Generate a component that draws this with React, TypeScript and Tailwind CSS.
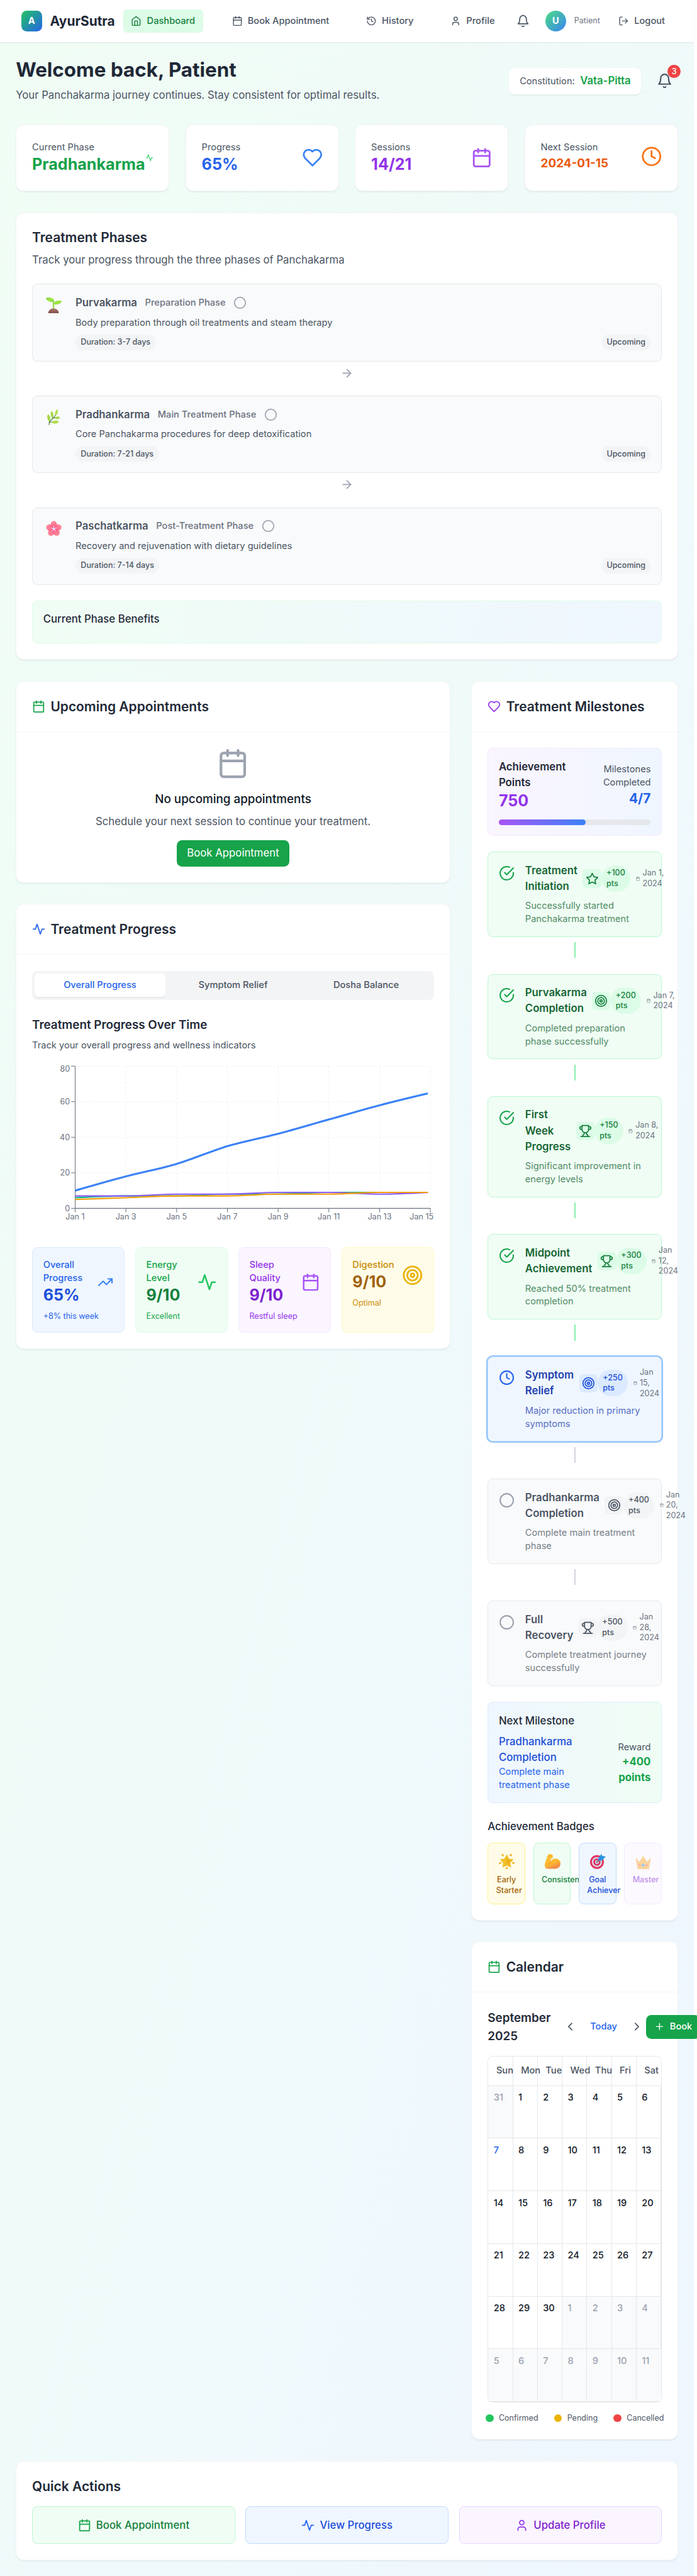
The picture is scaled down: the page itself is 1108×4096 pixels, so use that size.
import React from "react";

/* ---------- palette ---------- */

const PALETTE = [
  "[--color-gray-50:#f9fafb] [--color-gray-100:#f3f4f6] [--color-gray-200:#e5e7eb] [--color-gray-300:#d1d5db] [--color-gray-400:#9ca3af]",
  "[--color-gray-500:#6b7280] [--color-gray-600:#4b5563] [--color-gray-700:#374151] [--color-gray-800:#1f2937] [--color-gray-900:#111827]",
  "[--color-green-50:#f0fdf4] [--color-green-100:#dcfce7] [--color-green-200:#bbf7d0] [--color-green-300:#86efac] [--color-green-400:#4ade80]",
  "[--color-green-500:#22c55e] [--color-green-600:#16a34a] [--color-green-700:#15803d] [--color-green-800:#166534]",
  "[--color-blue-50:#eff6ff] [--color-blue-100:#dbeafe] [--color-blue-200:#bfdbfe] [--color-blue-300:#93c5fd] [--color-blue-500:#3b82f6]",
  "[--color-blue-600:#2563eb] [--color-blue-700:#1d4ed8] [--color-blue-800:#1e40af]",
  "[--color-purple-50:#faf5ff] [--color-purple-100:#f3e8ff] [--color-purple-200:#e9d5ff] [--color-purple-500:#a855f7] [--color-purple-600:#9333ea] [--color-purple-700:#7e22ce]",
  "[--color-yellow-50:#fefce8] [--color-yellow-100:#fef9c3] [--color-yellow-200:#fef08a] [--color-yellow-500:#eab308] [--color-yellow-600:#ca8a04] [--color-yellow-700:#a16207]",
  "[--color-orange-500:#f97316] [--color-orange-600:#ea580c] [--color-red-500:#ef4444]",
].join(" ");

/* ---------- icons ---------- */

const ICONS: Record<string, React.ReactNode> = {
  home: (
    <>
      <path d="m3 9 9-7 9 7v11a2 2 0 0 1-2 2H5a2 2 0 0 1-2-2z" />
      <polyline points="9 22 9 12 15 12 15 22" />
    </>
  ),
  calendar: (
    <>
      <rect width="18" height="18" x="3" y="4" rx="2" ry="2" />
      <line x1="16" x2="16" y1="2" y2="6" />
      <line x1="8" x2="8" y1="2" y2="6" />
      <line x1="3" x2="21" y1="10" y2="10" />
    </>
  ),
  history: (
    <>
      <path d="M3 12a9 9 0 1 0 9-9 9.75 9.75 0 0 0-6.74 2.74L3 8" />
      <path d="M3 3v5h5" />
      <path d="M12 7v5l4 2" />
    </>
  ),
  user: (
    <>
      <path d="M19 21v-2a4 4 0 0 0-4-4H9a4 4 0 0 0-4 4v2" />
      <circle cx="12" cy="7" r="4" />
    </>
  ),
  bell: (
    <>
      <path d="M6 8a6 6 0 0 1 12 0c0 7 3 9 3 9H3s3-2 3-9" />
      <path d="M10.3 21a1.94 1.94 0 0 0 3.4 0" />
    </>
  ),
  logout: (
    <>
      <path d="M9 21H5a2 2 0 0 1-2-2V5a2 2 0 0 1 2-2h4" />
      <polyline points="16 17 21 12 16 7" />
      <line x1="21" x2="9" y1="12" y2="12" />
    </>
  ),
  activity: <path d="M22 12h-4l-3 9L9 3l-3 9H2" />,
  heart: (
    <path d="M19 14c1.49-1.46 3-3.21 3-5.5A5.5 5.5 0 0 0 16.5 3c-1.76 0-3 .5-4.5 2-1.5-1.5-2.74-2-4.5-2A5.5 5.5 0 0 0 2 8.5c0 2.3 1.5 4.05 3 5.5l7 7Z" />
  ),
  clock: (
    <>
      <circle cx="12" cy="12" r="10" />
      <polyline points="12 6 12 12 16 14" />
    </>
  ),
  circle: <circle cx="12" cy="12" r="10" />,
  arrowRight: (
    <>
      <path d="M5 12h14" />
      <path d="m12 5 7 7-7 7" />
    </>
  ),
  trending: (
    <>
      <polyline points="22 7 13.5 15.5 8.5 10.5 2 17" />
      <polyline points="16 7 22 7 22 13" />
    </>
  ),
  target: (
    <>
      <circle cx="12" cy="12" r="10" />
      <circle cx="12" cy="12" r="6" />
      <circle cx="12" cy="12" r="2" />
    </>
  ),
  star: (
    <polygon points="12 2 15.09 8.26 22 9.27 17 14.14 18.18 21.02 12 17.77 5.82 21.02 7 14.14 2 9.27 8.91 8.26 12 2" />
  ),
  trophy: (
    <>
      <path d="M6 9H4.5a2.5 2.5 0 0 1 0-5H6" />
      <path d="M18 9h1.5a2.5 2.5 0 0 0 0-5H18" />
      <path d="M4 22h16" />
      <path d="M10 14.66V17c0 .55-.47.98-.97 1.21C7.85 18.75 7 20.24 7 22" />
      <path d="M14 14.66V17c0 .55.47.98.97 1.21C16.15 18.75 17 20.24 17 22" />
      <path d="M18 2H6v7a6 6 0 0 0 12 0V2Z" />
    </>
  ),
  check: (
    <>
      <path d="M22 11.08V12a10 10 0 1 1-5.93-9.14" />
      <path d="m9 11 3 3L22 4" />
    </>
  ),
  left: <path d="m15 18-6-6 6-6" />,
  right: <path d="m9 18 6-6-6-6" />,
  plus: (
    <>
      <path d="M5 12h14" />
      <path d="M12 5v14" />
    </>
  ),
};

function Icon({ name, className }: { name: string; className: string }) {
  return (
    <svg
      width="24"
      height="24"
      viewBox="0 0 24 24"
      fill="none"
      stroke="currentColor"
      strokeWidth="2"
      strokeLinecap="round"
      strokeLinejoin="round"
      className={className}
    >
      {ICONS[name]}
    </svg>
  );
}

/* ---------- pictograms ---------- */

const PETALS = [0, 72, 144, 216, 288];

const PICTOGRAMS: Record<string, React.ReactNode> = {
  seedling: (
    <>
      <defs>
        <linearGradient id="leaf" x1="0" y1="0" x2="1" y2="1">
          <stop offset="0" stopColor="#6bc93c" />
          <stop offset="0.5" stopColor="#a5e844" />
          <stop offset="1" stopColor="#7fd43c" />
        </linearGradient>
        <radialGradient id="soil" cx="0.5" cy="0.2" r="0.8">
          <stop offset="0" stopColor="#a9736b" />
          <stop offset="1" stopColor="#80504b" />
        </radialGradient>
      </defs>
      <path d="M10.4 6h2.2v13h-2.2z" fill="#96dc4a" />
      <path d="M0 1C1 .2 3.5 0 6 .2c4 .4 6.800 2.400 6.600 5.900C12.500 7 11 6.600 8.500 6.600 4.500 6.600 1 4.500 0 1Z" fill="url(#leaf)" />
      <path d="M23.700 5.200c-2.500-.6-6-.5-8.400.6-2.200 1-3.300 2.700-3.100 4.900 2 .3 5 .2 7.300-.6 2.500-.9 4-2.600 4.200-4.900Z" fill="url(#leaf)" />
      <path d="M3.500 24c0-4.200 3.500-7.300 8-7.300s8 3.100 8 7.300Z" fill="url(#soil)" />
    </>
  ),
  herb: (
    <>
      <path d="M5 23.500v-3.500c1-2.500 4-5 6.500-7.500 2-2 3.300-3.800 3.800-6M5.500 20c1.500-1 4-1 7-1M10.500 13.300c1.500-.6 3-.6 5-.6M9.800 12.500 9 8M5.500 19 4.500 14" stroke="#5f8f4a" strokeWidth="1.300" fill="none" strokeLinecap="round" />
      <ellipse cx="4.400" cy="12.800" rx="2.200" ry="4.900" transform="rotate(-12 4.400 12.800)" fill="#a9d94b" />
      <ellipse cx="9.300" cy="7.500" rx="1.900" ry="4.500" transform="rotate(-8 9.300 7.500)" fill="#a3d644" />
      <ellipse cx="16" cy="4.600" rx="1.900" ry="4.400" transform="rotate(16 16 4.600)" fill="#b4e04c" />
      <ellipse cx="17.600" cy="12.800" rx="3.600" ry="1.900" transform="rotate(-6 17.600 12.800)" fill="#a6d846" />
      <ellipse cx="14.300" cy="19.200" rx="4.900" ry="2.200" transform="rotate(-8 14.300 19.200)" fill="#b0dd44" />
    </>
  ),
  blossom: (
    <>
      <defs>
        <linearGradient id="petal" x1="0" y1="0" x2="0" y2="1">
          <stop offset="0" stopColor="#ff8fa0" />
          <stop offset="1" stopColor="#f7577f" />
        </linearGradient>
      </defs>
      {PETALS.map((a) => (
        <ellipse key={a} cx="12" cy="6.200" rx="4.800" ry="5.900" transform={`rotate(${a} 12 12.400)`} fill="url(#petal)" />
      ))}
      {PETALS.map((a) => (
        <path key={a} d="M12 12.400V8" transform={`rotate(${a} 12 12.400)`} stroke="#e9d3ff" strokeWidth="1" strokeLinecap="round" />
      ))}
      <circle cx="12" cy="12.400" r="2" fill="#e6d6ff" />
    </>
  ),
  glow: (
    <>
      <path d="m12 3 2.900 5.600 6.100 1-4.400 4.400 1 6.200L12 17.400l-5.600 2.800 1-6.200L3 9.600l6.100-1Z" fill="#f3bf26" stroke="#f3bf26" strokeWidth="1.600" strokeLinejoin="round" />
      <path d="m12 6 2 4 4.500.8-3.200 3.100.7 4.300-4-2Z" fill="#dfa51d" opacity="0.55" />
      <g fill="#f0b429">
        <ellipse cx="5.800" cy="2.600" rx="1.900" ry="1.500" transform="rotate(40 5.800 2.600)" />
        <ellipse cx="18.200" cy="2.600" rx="1.900" ry="1.500" transform="rotate(-40 18.200 2.600)" />
        <ellipse cx="2" cy="14.600" rx="2" ry="1.400" transform="rotate(-20 2 14.600)" />
        <ellipse cx="22" cy="14.600" rx="2" ry="1.400" transform="rotate(20 22 14.600)" />
        <ellipse cx="12" cy="22.300" rx="1.700" ry="1.600" />
      </g>
    </>
  ),
  biceps: (
    <>
      <defs>
        <linearGradient id="arm" x1="0" y1="0" x2="0.4" y2="1">
          <stop offset="0" stopColor="#ffc83d" />
          <stop offset="0.700" stopColor="#ffb62e" />
          <stop offset="1" stopColor="#f28b4b" />
        </linearGradient>
      </defs>
      <path d="M4 3.500C5 1.500 7 .6 9.200 1c2.200.4 3.500 1.800 3.300 4-.1 1.800-1.400 2.700-3 2.600l-.9 5c1.500-3 4.300-4.800 7.600-4.800 4.400 0 7.600 3 7.600 7.400 0 5.300-3.800 8.300-9.800 8.300H4.500C1.600 23.500 0 21.600 0 18.500 0 13 2.800 9 4 3.500Z" fill="url(#arm)" />
      <path d="M5.500 4.300c1.200-.9 3-.8 4.300.2M8.600 12.600c-.2 1.600-1 2.800-2.300 3.600" stroke="#e58a2c" strokeWidth="0.900" fill="none" strokeLinecap="round" />
    </>
  ),
  bullseye: (
    <>
      <circle cx="10.500" cy="13.200" r="10.500" fill="#e2315f" />
      <circle cx="10.500" cy="13.200" r="7.800" fill="#d9cfe0" />
      <circle cx="10.500" cy="13.200" r="5.400" fill="#dc2d5b" />
      <circle cx="10.500" cy="13.200" r="3" fill="#d9cfe0" />
      <circle cx="10.500" cy="13.200" r="1.200" fill="#6b6a7a" />
      <path d="m10.500 13.200 7-7" stroke="#4c6c8c" strokeWidth="1.200" />
      <path d="M12.500 7.500 17.200.8l1.300 3.300 5.500.6-5.500 5.800-5.200 1Z" fill="#2b9ae6" />
      <path d="m14.800 9 5.700-5" stroke="#1672bd" strokeWidth="0.900" />
    </>
  ),
  crown: (
    <>
      <path d="m1.500 9 4.800 4.500L12 5l5.700 8.500L22.500 9 20 23.500H4Z" fill="#f5a93c" stroke="#f5a93c" strokeWidth="1.200" strokeLinejoin="round" />
      <circle cx="12" cy="5.400" r="1.500" fill="#f9c354" />
      <circle cx="1.600" cy="8.800" r="1.400" fill="#f9c354" />
      <circle cx="22.400" cy="8.800" r="1.400" fill="#f9c354" />
      <circle cx="12" cy="18" r="2.300" fill="#4d8df0" />
      <circle cx="6.600" cy="18" r="1.200" fill="#ec3a6b" />
      <circle cx="17.400" cy="18" r="1.200" fill="#ec3a6b" />
    </>
  ),
};

function Pictogram({ name }: { name: string }) {
  return (
    <div className="flex h-8 w-[33px] items-center justify-center">
      <svg width="24" height="24" viewBox="0 0 24 24" className="h-6 w-6 shrink-0">
        {PICTOGRAMS[name]}
      </svg>
    </div>
  );
}

/* ---------- header ---------- */

function Header() {
  const items = [
    { icon: "home", label: "Dashboard", active: true },
    { icon: "calendar", label: "Book Appointment", active: false },
    { icon: "history", label: "History", active: false },
    { icon: "user", label: "Profile", active: false },
  ];
  return (
    <header className="h-[64.8px] border-b border-gray-200 bg-white shadow-xs">
      <div className="flex h-16 items-center justify-between px-8">
        <div className="flex items-center space-x-3">
          <div className="flex h-8 w-8 items-center justify-center rounded-lg bg-linear-to-br/srgb from-green-500 to-blue-600">
            <span className="text-sm font-bold text-white">A</span>
          </div>
          <span className="text-xl font-bold text-gray-800">AyurSutra</span>
        </div>
        <nav className="flex space-x-8">
          {items.map((it) => (
            <a
              key={it.label}
              className={
                it.active
                  ? "flex items-center space-x-2 rounded-md bg-green-100 px-3 py-2 text-sm font-medium text-green-700"
                  : "flex items-center space-x-2 rounded-md px-3 py-2 text-sm font-medium text-gray-600"
              }
            >
              <Icon name={it.icon} className="h-4 w-4" />
              <span>{it.label}</span>
            </a>
          ))}
        </nav>
        <div className="flex items-center space-x-4">
          <button className="p-2 text-gray-600">
            <Icon name="bell" className="h-5 w-5" />
          </button>
          <div className="flex items-center space-x-3">
            <div className="flex h-8 w-8 items-center justify-center rounded-full bg-linear-to-br/srgb from-green-400 to-blue-500">
              <span className="text-sm font-bold text-white">U</span>
            </div>
            <span className="text-xs text-gray-500">Patient</span>
          </div>
          <button className="flex items-center space-x-2 px-3 py-2 text-sm font-medium text-gray-600">
            <Icon name="logout" className="h-4 w-4" />
            <span>Logout</span>
          </button>
        </div>
      </div>
    </header>
  );
}

/* ---------- summary ---------- */

function Welcome() {
  return (
    <div className="mb-8 flex items-center justify-between">
      <div>
        <h1 className="text-3xl font-bold text-gray-800">Welcome back, Patient</h1>
        <p className="mt-2 text-gray-600">
          Your Panchakarma journey continues. Stay consistent for optimal results.
        </p>
      </div>
      <div className="flex items-center space-x-4">
        <div className="rounded-lg bg-white px-4 py-2 shadow-xs">
          <span className="text-sm text-gray-600">Constitution:</span>
          <span className="ml-2 font-semibold text-green-600">Vata-Pitta</span>
        </div>
        <div className="relative p-2 text-gray-600">
          <Icon name="bell" className="h-6 w-6" />
          <span className="absolute -top-1 -right-1 flex h-5 w-5 items-center justify-center rounded-full bg-red-500 text-xs font-medium text-white">
            3
          </span>
        </div>
      </div>
    </div>
  );
}

function Stats() {
  const stats = [
    { label: "Current Phase", value: "Pradhankarma", icon: "activity", text: "text-2xl font-bold text-green-600", tone: "h-8 w-8 text-green-500" },
    { label: "Progress", value: "65%", icon: "heart", text: "text-2xl font-bold text-blue-600", tone: "h-8 w-8 text-blue-500" },
    { label: "Sessions", value: "14/21", icon: "calendar", text: "text-2xl font-bold text-purple-600", tone: "h-8 w-8 text-purple-500" },
    { label: "Next Session", value: "2024-01-15", icon: "clock", text: "text-lg font-bold text-orange-600", tone: "h-8 w-8 text-orange-500" },
  ];
  return (
    <div className="mb-8 grid grid-cols-4 gap-6">
      {stats.map((s) => (
        <div key={s.label} className="rounded-xl border border-gray-100 bg-white p-[23.85px] shadow-xs">
          <div className="flex items-center justify-between">
            <div>
              <p className="text-sm text-gray-600">{s.label}</p>
              <p className={s.text}>{s.value}</p>
            </div>
            <Icon name={s.icon} className={s.tone} />
          </div>
        </div>
      ))}
    </div>
  );
}

/* ---------- phases ---------- */

function Phases() {
  const phases = [
    { name: "Purvakarma", kind: "Preparation Phase", text: "Body preparation through oil treatments and steam therapy", days: "3-7 days", pic: "seedling" },
    { name: "Pradhankarma", kind: "Main Treatment Phase", text: "Core Panchakarma procedures for deep detoxification", days: "7-21 days", pic: "herb" },
    { name: "Paschatkarma", kind: "Post-Treatment Phase", text: "Recovery and rejuvenation with dietary guidelines", days: "7-14 days", pic: "blossom" },
  ];
  return (
    <section className="mb-8 rounded-xl border border-gray-100 bg-white p-[23.85px] shadow-xs">
      <div className="mb-6">
        <h2 className="text-xl font-semibold text-gray-800">Treatment Phases</h2>
        <p className="mt-2 text-gray-600">Track your progress through the three phases of Panchakarma</p>
      </div>
      <div className="space-y-6">
        {phases.map((p, i) => (
          <div key={p.name}>
            <div className="flex items-start space-x-4 rounded-lg border border-gray-200 bg-gray-50 p-[15.85px]">
              <Pictogram name={p.pic} />
              <div className="flex-1">
                <div className="flex items-center space-x-3">
                  <h3 className="font-semibold text-gray-600">{p.name}</h3>
                  <span className="text-sm font-medium text-gray-500">{p.kind}</span>
                  <Icon name="circle" className="h-5 w-5 text-gray-400" />
                </div>
                <p className="mt-2 text-sm text-gray-600">{p.text}</p>
                <div className="mt-2 flex items-center justify-between text-xs font-medium text-gray-600">
                  <span className="rounded-full bg-gray-100 px-2 py-1">Duration: {p.days}</span>
                  <span className="rounded-full bg-gray-100 px-2 py-1">Upcoming</span>
                </div>
              </div>
            </div>
            {i < 2 && (
              <div className="mt-2 flex justify-center">
                <Icon name="arrowRight" className="h-5 w-5 text-gray-400" />
              </div>
            )}
          </div>
        ))}
      </div>
      <div className="mt-6 rounded-lg border border-green-100 bg-linear-to-r/srgb from-green-50 to-blue-50 p-[15.85px]">
        <h3 className="mb-2 font-medium text-gray-800">Current Phase Benefits</h3>
      </div>
    </section>
  );
}

/* ---------- cards ---------- */

function Card({ icon, tone, title, children }: { icon: string; tone: string; title: string; children: React.ReactNode }) {
  return (
    <section className="rounded-xl border border-gray-100 bg-white shadow-xs">
      <div className="-mt-[0.155px] -mr-[0.155px] -ml-[0.155px] border-b border-gray-100 p-6 pb-[23.85px]">
        <h2 className="flex items-center space-x-2 text-xl font-semibold text-gray-800">
          <Icon name={icon} className={tone} />
          <span>{title}</span>
        </h2>
      </div>
      <div className="-mx-[0.155px] -mb-[0.155px] p-6">{children}</div>
    </section>
  );
}

function Appointments() {
  return (
    <Card icon="calendar" tone="h-5 w-5 text-green-600" title="Upcoming Appointments">
      <div className="flex flex-col items-center text-center">
        <Icon name="calendar" className="mb-4 h-12 w-12 text-gray-400" />
        <h3 className="mb-2 text-lg font-medium text-gray-900">No upcoming appointments</h3>
        <p className="mb-4 text-gray-600">Schedule your next session to continue your treatment.</p>
        <button className="rounded-lg bg-green-600 px-4 py-2 text-white">Book Appointment</button>
      </div>
    </Card>
  );
}

/* ---------- chart ---------- */

const PLOT = { left: 65, right: 604.3, top: 5, bottom: 221 };
const DAYS = ["Jan 1", "Jan 3", "Jan 5", "Jan 7", "Jan 9", "Jan 11", "Jan 13", "Jan 15"];
const SERIES = [
  { color: "#3b82f6", width: 3, data: [10, 18, 25, 35, 42, 50, 58, 65] },
  { color: "#10b981", width: 2, data: [6, 7, 7, 8, 8, 9, 9, 9] },
  { color: "#8b5cf6", width: 2, data: [7, 7, 8, 8, 9, 9, 8, 9] },
  { color: "#f59e0b", width: 2, data: [5, 6, 7, 7, 8, 8, 9, 9] },
];

const px = (i: number) => PLOT.left + ((PLOT.right - PLOT.left) / 7) * i;
const py = (v: number) => PLOT.bottom - ((PLOT.bottom - PLOT.top) * v) / 80;

/* Monotone cubic interpolation through equally spaced points. */
function monotone(data: number[]) {
  const ys = data.map(py);
  const h = px(1) - px(0);
  const n = ys.length;
  const slope = ys.slice(1).map((y, i) => (y - ys[i]) / h);
  const m = ys.map((_, i) => {
    if (i === 0 || i === n - 1) return 0;
    const a = slope[i - 1];
    const b = slope[i];
    return (Math.sign(a) + Math.sign(b)) * Math.min(Math.abs(a), Math.abs(b), 0.5 * Math.abs((a + b) / 2)) || 0;
  });
  m[0] = (3 * slope[0] - m[1]) / 2;
  m[n - 1] = (3 * slope[n - 2] - m[n - 2]) / 2;
  let d = `M${px(0)},${ys[0]}`;
  for (let i = 1; i < n; i++) {
    d += `C${px(i - 1) + h / 3},${ys[i - 1] + (m[i - 1] * h) / 3} ${px(i) - h / 3},${ys[i] - (m[i] * h) / 3} ${px(i)},${ys[i]}`;
  }
  return d;
}

function ProgressChart() {
  return (
    <svg width="609.3" height="256" viewBox="0 0 609.3 256" className="h-64 w-full text-xs">
      <defs>
        <clipPath id="reveal">
          <rect x="65" y="0" width="535.5" height="230" />
        </clipPath>
      </defs>
      <g stroke="#f0f0f0" strokeDasharray="3 3">
        {[0, 20, 40, 60, 80].map((v) => (
          <line key={v} x1={PLOT.left} x2={PLOT.right} y1={py(v)} y2={py(v)} />
        ))}
        {DAYS.map((d, i) => (
          <line key={d} x1={px(i)} x2={px(i)} y1={PLOT.top} y2={PLOT.bottom} />
        ))}
      </g>
      <g stroke="#6b7280">
        <line x1={PLOT.left} x2={PLOT.right} y1={PLOT.bottom} y2={PLOT.bottom} />
        <line x1={PLOT.left} x2={PLOT.left} y1={PLOT.top} y2={PLOT.bottom} />
        {[0, 20, 40, 60, 80].map((v) => (
          <line key={v} x1={PLOT.left - 6} x2={PLOT.left} y1={py(v)} y2={py(v)} />
        ))}
        {DAYS.map((d, i) => (
          <line key={d} x1={px(i)} x2={px(i)} y1={PLOT.bottom} y2={PLOT.bottom + 6} />
        ))}
      </g>
      <g fill="#6b7280">
        {[0, 20, 40, 60, 80].map((v) => (
          <text key={v} x={PLOT.left - 8} y={v === 80 ? py(v) + 8.5 : py(v) + 4.26} textAnchor="end">
            {v}
          </text>
        ))}
        {DAYS.map((d, i) => (
          <text key={d} x={i === 7 ? 591 : px(i)} y={PLOT.bottom + 16.5} textAnchor="middle">
            {d}
          </text>
        ))}
      </g>
      <g fill="none" clipPath="url(#reveal)">
        {SERIES.map((s) => (
          <path key={s.color} d={monotone(s.data)} stroke={s.color} strokeWidth={s.width} />
        ))}
      </g>
    </svg>
  );
}

function Progress() {
  const metrics = [
    { label: "Overall Progress", value: "65%", note: "+8% this week", icon: "trending", box: "rounded-lg border border-blue-100 bg-blue-50 p-[15.85px]", soft: "text-blue-600", strong: "text-blue-700", tone: "h-8 w-8 text-blue-500" },
    { label: "Energy Level", value: "9/10", note: "Excellent", icon: "activity", box: "rounded-lg border border-green-100 bg-green-50 p-[15.85px]", soft: "text-green-600", strong: "text-green-700", tone: "h-8 w-8 text-green-500" },
    { label: "Sleep Quality", value: "9/10", note: "Restful sleep", icon: "calendar", box: "rounded-lg border border-purple-100 bg-purple-50 p-[15.85px]", soft: "text-purple-600", strong: "text-purple-700", tone: "h-8 w-8 text-purple-500" },
    { label: "Digestion", value: "9/10", note: "Optimal", icon: "target", box: "rounded-lg border border-yellow-100 bg-yellow-50 p-[15.85px]", soft: "text-yellow-600", strong: "text-yellow-700", tone: "h-8 w-8 text-yellow-500" },
  ];
  return (
    <Card icon="activity" tone="h-5 w-5 text-blue-600" title="Treatment Progress">
      <div className="mb-6 flex space-x-1 rounded-lg bg-gray-100 p-1 text-sm font-medium text-gray-600">
        <button className="flex-1 rounded-md bg-white px-4 py-2 text-blue-600 shadow-xs">Overall Progress</button>
        <button className="flex-1 rounded-md px-4 py-2">Symptom Relief</button>
        <button className="flex-1 rounded-md px-4 py-2">Dosha Balance</button>
      </div>
      <h3 className="mb-2 text-lg font-semibold text-gray-800">Treatment Progress Over Time</h3>
      <p className="mb-4 text-sm text-gray-600">Track your overall progress and wellness indicators</p>
      <ProgressChart />
      <div className="mt-6 grid grid-cols-4 gap-4">
        {metrics.map((m) => (
          <div key={m.label} className={m.box}>
            <div className="flex items-center justify-between">
              <div>
                <p className={`text-sm font-medium ${m.soft}`}>{m.label}</p>
                <p className={`text-2xl font-bold ${m.strong}`}>{m.value}</p>
              </div>
              <Icon name={m.icon} className={m.tone} />
            </div>
            <p className={`mt-2 text-xs ${m.soft}`}>{m.note}</p>
          </div>
        ))}
      </div>
    </Card>
  );
}

/* ---------- milestones ---------- */

const TONES = {
  done: {
    box: "rounded-lg border border-green-200 bg-green-50 p-[15.85px]",
    icon: "mt-1 h-6 w-6 shrink-0 text-green-600",
    title: "font-semibold text-green-800",
    text: "mt-2 text-sm text-green-800 opacity-75",
    chip: "rounded-md bg-green-100 p-1 text-green-700",
    pill: "rounded-full bg-green-100 px-2 py-1 text-xs font-medium text-green-700",
    line: "h-6 w-[1.6px] bg-green-300",
  },
  active: {
    box: "rounded-lg border border-blue-200 bg-blue-50 p-[15.85px] ring-2 ring-blue-300",
    icon: "mt-1 h-6 w-6 shrink-0 text-blue-600",
    title: "font-semibold text-blue-800",
    text: "mt-2 text-sm text-blue-800 opacity-75",
    chip: "rounded-md bg-blue-100 p-1 text-blue-700",
    pill: "rounded-full bg-blue-100 px-2 py-1 text-xs font-medium text-blue-700",
    line: "h-6 w-[1.6px] bg-gray-300",
  },
  next: {
    box: "rounded-lg border border-gray-200 bg-gray-50 p-[15.85px]",
    icon: "mt-1 h-6 w-6 shrink-0 text-gray-400",
    title: "font-semibold text-gray-600",
    text: "mt-2 text-sm text-gray-600 opacity-75",
    chip: "rounded-md bg-gray-100 p-1 text-gray-600",
    pill: "rounded-full bg-gray-100 px-2 py-1 text-xs font-medium text-gray-600",
    line: "h-6 w-[1.6px] bg-gray-300",
  },
};

type Milestone = { tone: keyof typeof TONES; mark: string; title: string; text: string; kind: string; pts: number; date: string };

const MILESTONES: Milestone[] = [
  { tone: "done", mark: "check", title: "Treatment Initiation", text: "Successfully started Panchakarma treatment", kind: "star", pts: 100, date: "Jan 1, 2024" },
  { tone: "done", mark: "check", title: "Purvakarma Completion", text: "Completed preparation phase successfully", kind: "target", pts: 200, date: "Jan 7, 2024" },
  { tone: "done", mark: "check", title: "First Week Progress", text: "Significant improvement in energy levels", kind: "trophy", pts: 150, date: "Jan 8, 2024" },
  { tone: "done", mark: "check", title: "Midpoint Achievement", text: "Reached 50% treatment completion", kind: "trophy", pts: 300, date: "Jan 12, 2024" },
  { tone: "active", mark: "clock", title: "Symptom Relief", text: "Major reduction in primary symptoms", kind: "target", pts: 250, date: "Jan 15, 2024" },
  { tone: "next", mark: "circle", title: "Pradhankarma Completion", text: "Complete main treatment phase", kind: "target", pts: 400, date: "Jan 20, 2024" },
  { tone: "next", mark: "circle", title: "Full Recovery", text: "Complete treatment journey successfully", kind: "trophy", pts: 500, date: "Jan 28, 2024" },
];

function MilestoneItem({ m, last }: { m: Milestone; last: boolean }) {
  const t = TONES[m.tone];
  return (
    <div>
      <div className={t.box}>
        <div className="flex items-start space-x-4">
          <Icon name={m.mark} className={t.icon} />
          <div className="min-w-0 flex-1">
            <div className="flex items-center justify-between">
              <div className="flex items-center space-x-2">
                <h4 className={t.title}>{m.title}</h4>
                <div className={t.chip}>
                  <Icon name={m.kind} className="h-5 w-5" />
                </div>
              </div>
              <div className="flex items-center space-x-2">
                <span className={t.pill}>+{m.pts} pts</span>
                <div className="flex items-center space-x-1 text-xs text-gray-500">
                  <Icon name="calendar" className="h-3 w-3" />
                  <span>{m.date}</span>
                </div>
              </div>
            </div>
            <p className={t.text}>{m.text}</p>
          </div>
        </div>
      </div>
      {!last && (
        <div className="mt-2 flex justify-center">
          <div className={t.line} />
        </div>
      )}
    </div>
  );
}

function Milestones() {
  const badges = [
    { pic: "glow", label: "Early Starter", box: "rounded-lg border border-yellow-200 bg-yellow-50 p-[11.85px] text-yellow-700" },
    { pic: "biceps", label: "Consistent", box: "rounded-lg border border-green-200 bg-green-50 p-[11.85px] text-green-700" },
    { pic: "bullseye", label: "Goal Achiever", box: "rounded-lg border border-blue-200 bg-blue-50 p-[11.85px] text-blue-700" },
    { pic: "crown", label: "Master", box: "rounded-lg border border-purple-200 bg-purple-50 p-[11.85px] text-purple-700 opacity-50" },
  ];
  return (
    <Card icon="heart" tone="h-5 w-5 text-purple-600" title="Treatment Milestones">
      <div className="mb-6 rounded-lg border border-purple-100 bg-linear-to-r/srgb from-purple-50 to-blue-50 p-[15.85px]">
        <div className="flex items-center justify-between">
          <div>
            <h3 className="font-semibold text-gray-800">Achievement Points</h3>
            <p className="text-2xl font-bold text-purple-600">750</p>
          </div>
          <div className="text-right">
            <p className="text-sm text-gray-600">Milestones Completed</p>
            <p className="text-xl font-bold text-blue-600">4/7</p>
          </div>
        </div>
        <div className="mt-3 h-2 rounded-full bg-gray-200">
          <div className="h-2 w-[57.14%] rounded-full bg-linear-to-r/srgb from-purple-500 to-blue-500" />
        </div>
      </div>
      <div className="space-y-6">
        {MILESTONES.map((m, i) => (
          <MilestoneItem key={m.title} m={m} last={i === MILESTONES.length - 1} />
        ))}
      </div>
      <div className="mt-6 rounded-lg border border-blue-100 bg-linear-to-r/srgb from-blue-50 to-green-50 p-[15.85px]">
        <h3 className="mb-2 font-medium text-gray-800">Next Milestone</h3>
        <div className="flex items-center justify-between">
          <div>
            <p className="font-medium text-blue-700">Pradhankarma Completion</p>
            <p className="text-sm text-blue-600">Complete main treatment phase</p>
          </div>
          <div className="text-right">
            <p className="text-sm text-gray-600">Reward</p>
            <p className="font-bold text-green-600">+400 points</p>
          </div>
        </div>
      </div>
      <h3 className="mt-6 mb-3 font-medium text-gray-800">Achievement Badges</h3>
      <div className="grid grid-cols-4 gap-3">
        {badges.map((b) => (
          <div key={b.label} className={b.box}>
            <div className="mb-1">
              <Pictogram name={b.pic} />
            </div>
            <div className="text-center text-xs font-medium">{b.label}</div>
          </div>
        ))}
      </div>
    </Card>
  );
}

/* ---------- calendar ---------- */

function CalendarCard() {
  const days = Array.from({ length: 42 }, (_, i) => ({
    n: i === 0 ? 31 : i <= 30 ? i : i - 30,
    current: i > 0 && i <= 30,
    today: i === 7,
  }));
  return (
    <Card icon="calendar" tone="h-5 w-5 text-green-600" title="Calendar">
      <div className="mb-4 flex items-center justify-between">
        <div className="flex items-center space-x-4">
          <h2 className="text-lg font-semibold text-gray-800">September 2025</h2>
          <div className="flex items-center space-x-1 text-gray-600">
            <button className="p-1">
              <Icon name="left" className="h-5 w-5" />
            </button>
            <button className="px-3 py-1 text-sm font-medium text-blue-600">Today</button>
            <button className="p-1">
              <Icon name="right" className="h-5 w-5" />
            </button>
          </div>
        </div>
        <button className="flex items-center space-x-2 rounded-lg bg-green-600 px-3 py-2 text-sm font-medium text-white">
          <Icon name="plus" className="h-4 w-4 shrink-0" />
          <span>Book</span>
        </button>
      </div>
      <div className="rounded-lg border border-gray-200">
        <div className="-mt-[0.155px] -mb-[0.155px] grid grid-cols-7">
          {["Sun", "Mon", "Tue", "Wed", "Thu", "Fri", "Sat"].map((d) => (
            <div
              key={d}
              className={
                d === "Sat"
                  ? "border-b border-gray-200 p-3 pb-[11.85px] text-center text-sm font-medium text-gray-600"
                  : "border-r border-b border-gray-200 p-3 pb-[11.85px] text-center text-sm font-medium text-gray-600"
              }
            >
              {d}
            </div>
          ))}
          {days.map((d, i) => (
            <div
              key={i}
              className={
                d.current
                  ? "h-20 border-r border-b border-gray-200 p-2"
                  : "h-20 border-r border-b border-gray-200 bg-gray-50 p-2 last:border-r-0"
              }
            >
              <div
                className={
                  d.today
                    ? "text-sm font-medium text-blue-600"
                    : d.current
                      ? "text-sm font-medium text-gray-900"
                      : "text-sm font-medium text-gray-400"
                }
              >
                {d.n}
              </div>
            </div>
          ))}
        </div>
      </div>
      <div className="mt-4 flex items-center justify-center space-x-6 text-xs text-gray-600">
        <div className="flex items-center space-x-2">
          <span className="h-3 w-3 shrink-0 rounded-full bg-green-500" />
          <span>Confirmed</span>
        </div>
        <div className="flex items-center space-x-2">
          <span className="h-3 w-3 shrink-0 rounded-full bg-yellow-500" />
          <span>Pending</span>
        </div>
        <div className="flex items-center space-x-2">
          <span className="h-3 w-3 shrink-0 rounded-full bg-red-500" />
          <span>Cancelled</span>
        </div>
      </div>
    </Card>
  );
}

/* ---------- quick actions ---------- */

function QuickActions() {
  const actions = [
    { icon: "calendar", label: "Book Appointment", box: "flex items-center justify-center space-x-2 rounded-lg border border-green-200 bg-green-50 p-[15.85px] font-medium text-green-700", tone: "h-5 w-5 text-green-600" },
    { icon: "activity", label: "View Progress", box: "flex items-center justify-center space-x-2 rounded-lg border border-blue-200 bg-blue-50 p-[15.85px] font-medium text-blue-700", tone: "h-5 w-5 text-blue-600" },
    { icon: "user", label: "Update Profile", box: "flex items-center justify-center space-x-2 rounded-lg border border-purple-200 bg-purple-50 p-[15.85px] font-medium text-purple-700", tone: "h-5 w-5 text-purple-600" },
  ];
  return (
    <section className="mt-8 rounded-xl border border-gray-100 bg-white p-[23.85px] shadow-xs">
      <h2 className="mb-4 text-xl font-semibold text-gray-800">Quick Actions</h2>
      <div className="grid grid-cols-3 gap-4">
        {actions.map((a) => (
          <button key={a.label} className={a.box}>
            <Icon name={a.icon} className={a.tone} />
            <span>{a.label}</span>
          </button>
        ))}
      </div>
    </section>
  );
}

export default function App() {
  return (
    <div className="h-[4096px] w-[1108px] overflow-hidden bg-white">
      <div
        className={`${PALETTE} w-[1053.6px] bg-linear-to-br/srgb from-green-50 to-blue-50 font-[Inter,sans-serif] [zoom:1.047]`}
      >
        <Header />
        <main className="p-6">
          <Welcome />
          <Stats />
          <Phases />
          <div className="grid grid-cols-3 gap-8">
            <div className="col-span-2 space-y-8">
              <Appointments />
              <Progress />
            </div>
            <div className="space-y-8">
              <Milestones />
              <CalendarCard />
            </div>
          </div>
          <QuickActions />
        </main>
      </div>
    </div>
  );
}
